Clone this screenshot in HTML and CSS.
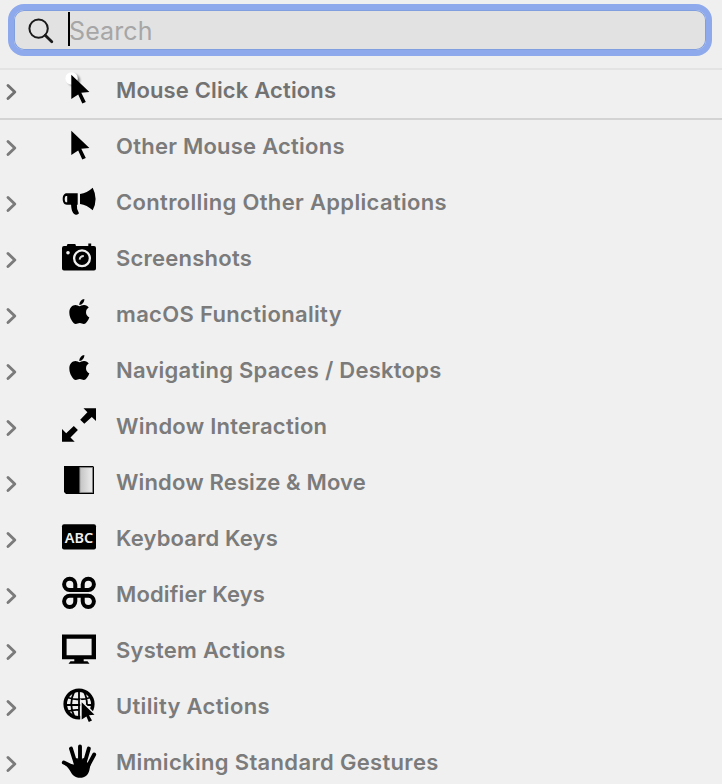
FILE: index.html
```html
<!DOCTYPE html>
<html lang="en">
<head>
<meta charset="utf-8">
<title>Actions</title>
<link rel="stylesheet" href="styles.css">
</head>
<body>
<svg class="defs" width="0" height="0">
  <symbol id="chevron" viewBox="0 0 14 20"><path d="M3 3.5 9.8 10 3 16.5" fill="none" stroke="currentColor" stroke-width="2.9" stroke-linecap="round" stroke-linejoin="round"/></symbol>
  <symbol id="pointer" viewBox="0 0 36 36"><path d="M9.3 2.8 27.4 20.1 19.3 20.7 23.8 30 20.3 31.4 16.2 22.4 9.3 27Z"/></symbol>
  <symbol id="apple" viewBox="0 0 36 36"><path transform="translate(7.1 1.2) scale(.0532 .0558)" d="M318.7 268.7c-.2-36.7 16.4-64.4 50-84.8-18.8-26.9-47.2-41.7-84.7-44.6-35.5-2.8-74.3 20.7-88.5 20.7-15 0-49.4-19.7-76.4-19.7C63.3 141.2 4 184.8 4 273.5q0 39.3 14.4 81.2c12.8 36.7 59 126.7 107.2 125.2 25.2-.6 43-17.9 75.8-17.9 31.8 0 48.3 17.9 76.4 17.9 48.6-.7 90.4-82.5 102.6-119.3-65.2-30.7-61.7-90-61.7-91.9zm-56.6-164.2c27.3-32.4 24.8-61.9 24-72.5-24.1 1.4-52 16.4-67.9 34.9-17.5 19.8-27.8 44.3-25.6 71.9 26.1 2 49.9-11.4 69.5-34.3z"/></symbol>
</svg>

<header class="toolbar">
  <div class="search">
    <svg class="search-icon" viewBox="0 0 26 26"><circle cx="10.6" cy="10.6" r="9.2" fill="none" stroke="#1a1a1a" stroke-width="2"/><path d="m17.2 17.2 6.6 6.6" stroke="#1a1a1a" stroke-width="2.8" stroke-linecap="round"/></svg>
    <span class="caret"></span><span class="placeholder">Search</span>
  </div>
</header>

<div class="row pinned">
  <svg class="chevron"><use href="#chevron"/></svg>
  <svg class="icon" viewBox="0 0 36 36">
    <defs><filter id="soft" x="-50%" y="-50%" width="200%" height="200%"><feGaussianBlur stdDeviation="1.2"/></filter></defs>
    <circle cx="12" cy="8.2" r="6" opacity=".45" filter="url(#soft)"/><circle cx="9.6" cy="6.5" r="6.2" fill="#fff"/><use href="#pointer"/>
  </svg>
  <span class="label tight">Mouse Click Actions</span>
</div>

<main class="list">
  <div class="row"><svg class="chevron"><use href="#chevron"/></svg><svg class="icon"><use href="#pointer"/></svg><span class="label">Other Mouse Actions</span></div>
  <div class="row"><svg class="chevron"><use href="#chevron"/></svg>
    <svg class="icon" viewBox="0 0 36 36"><path fill-rule="evenodd" d="M4.8 9.3H15.7V20.7H14.9Q14.4 25 17 29.3 15.8 31.3 13 30.5C9.8 28.5 9.3 24 9.1 20.7H4.8C2 20.7.7 18 .7 15S2 9.3 4.8 9.3ZM3.8 12C2.4 13 2.4 17 3.8 18.2H5.2V12ZM18 10Q25 9 30.7 3.7 36.5 15 30.7 26.3 25 21 18 20Z"/></svg><span class="label loose">Controlling Other Applications</span></div>
  <div class="row"><svg class="chevron"><use href="#chevron"/></svg>
    <svg class="icon" viewBox="0 0 36 36"><path d="M2 6H4.7L5.5 4H13.3L14 6H26.3V3.6H29.2V6H32Q34 6 34 8V28.6Q34 30.6 32 30.6H2Q0 30.6 0 28.6V8Q0 6 2 6Z"/><circle cx="20" cy="18.3" r="7.9" fill="none" stroke="#f0f0f0" stroke-width="2.3"/><path d="M17.6 19.6Q18 16.2 21.8 16" fill="none" stroke="#ddd" stroke-width="1.8"/><circle cx="6" cy="12.7" r="1.8" fill="#f0f0f0"/></svg><span class="label">Screenshots</span></div>
  <div class="row"><svg class="chevron"><use href="#chevron"/></svg><svg class="icon"><use href="#apple"/></svg><span class="label loose">macOS Functionality</span></div>
  <div class="row"><svg class="chevron"><use href="#chevron"/></svg><svg class="icon"><use href="#apple"/></svg><span class="label">Navigating Spaces / Desktops</span></div>
  <div class="row"><svg class="chevron"><use href="#chevron"/></svg>
    <svg class="icon" viewBox="0 0 36 36"><path d="M21.5.2H34V13L29.8 9 22.3 15.8 18.2 11.8 25.4 4.3ZM0 33.8V21L4.2 25.2 11.8 18 15.9 22 8.5 29.5 12.7 33.8Z"/></svg><span class="label">Window Interaction</span></div>
  <div class="row"><svg class="chevron"><use href="#chevron"/></svg>
    <svg class="icon" viewBox="0 0 36 36"><defs><linearGradient id="pane"><stop stop-color="#c4c4c4"/><stop offset="1" stop-color="#ececec"/></linearGradient></defs><path d="M2 2H31L32 3V30H4L2 28Z"/><rect x="17.9" y="3.6" width="12.5" height="24.8" fill="url(#pane)" stroke="#8c8c8c" stroke-width=".9"/></svg><span class="label tight">Window Resize &amp; Move</span></div>
  <div class="row"><svg class="chevron"><use href="#chevron"/></svg>
    <svg class="icon" viewBox="0 0 36 36"><rect y="4.2" width="34" height="25.4" rx="2"/><text class="abc" x="2.8" y="22.6" textLength="28.4">ABC</text></svg><span class="label tight">Keyboard Keys</span></div>
  <div class="row"><svg class="chevron"><use href="#chevron"/></svg>
    <svg class="icon" viewBox="0 0 36 36"><path d="M13.3 13.8V8.3A5.6 5.6 0 1 0 7.7 13.9H26.3A5.6 5.6 0 1 0 20.7 8.3V13.8M13.3 19.8V25.3A5.6 5.6 0 1 1 7.7 19.7H26.3A5.6 5.6 0 1 1 20.7 25.3V19.8" fill="none" stroke="#000" stroke-width="4"/></svg><span class="label tight">Modifier Keys</span></div>
  <div class="row"><svg class="chevron"><use href="#chevron"/></svg>
    <svg class="icon" viewBox="0 0 36 36"><path fill-rule="evenodd" d="M0 2.4H34V27.2H21.7V29.2H25.5L27.5 31.8H6.5L8.5 29.2H12.3V27.2H0ZM4.6 6.8V23.2H29.6V6.8Z"/></svg><span class="label">System Actions</span></div>
  <div class="row"><svg class="chevron"><use href="#chevron"/></svg>
    <svg class="icon" viewBox="0 0 36 36"><g fill="none" stroke="#000"><circle cx="17" cy="16" r="13.8" stroke-width="3.6"/><path d="M17 2V30M3 17H31M5.5 9.5Q17 13.5 28.5 9.5M5 23.5Q11 21.5 17 22M12.5 3Q6 16 12.5 29M21.5 3Q25 9 25 17" stroke-width="1.8"/></g><path d="M19.7 14.3 32.5 26.7 27 27.2 30 32.6 26.8 34 24.4 28.5 19.7 31.5Z" stroke="#f0f0f0" stroke-width="3" paint-order="stroke"/></svg><span class="label loose">Utility Actions</span></div>
  <div class="row"><svg class="chevron"><use href="#chevron"/></svg>
    <svg class="icon" viewBox="0 0 36 36"><path d="M1.8 18.6 9 22M9 4.6 13.5 19M18 2.4V19M26.8 4.6 22.6 19M32.2 10.5 26 22" stroke="#000" stroke-width="3.9" stroke-linecap="round"/><path d="M2.2 20.5 7 20 12 20.5 11.5 15 15.5 14 16.2 16 19.8 16 20.8 14 24.4 15 24.5 18 28.5 20.5C27.5 25 27.5 29 24.5 31.5 21 34.6 15 34.5 11.5 31.5 8.5 28.8 7.5 24 2.2 20.5Z"/></svg><span class="label loose">Mimicking Standard Gestures</span></div>
</main>
</body>
</html>
```
FILE: styles.css
```css
* { box-sizing: border-box; }
body {
  margin: 0;
  height: 784px;
  overflow: hidden;
  background: #f0f0f0;
  font-family: Inter, "Liberation Sans", sans-serif;
}
.defs { position: absolute; }
.toolbar {
  height: 70px;
  padding: 4px 10px 0 8px;
  background: #efefef;
  border-bottom: 2px solid #e3e3e3;
}
.search {
  display: flex;
  align-items: center;
  height: 52px;
  padding-left: 14px;
  border: 6px solid #8eaaec;
  border-radius: 16px;
  background: #e2e2e2;
  box-shadow: inset 0 0 0 1px #819fdf;
  background-clip: padding-box;
}
.search-icon { width: 26px; height: 26px; margin: 1px 14px 0 0; }
.caret { width: 2px; height: 34px; margin: -3px -1px 0 0; background: #000; }
.placeholder { padding-top: 2px; color: #a6a6a6; font-size: 25px; line-height: 36px; letter-spacing: .1px; }
.row {
  display: flex;
  align-items: center;
  height: 56px;
  padding-left: 5px;
  color: #7b7b7b;
}
.pinned {
  height: 50px;
  padding-bottom: 8px;
  border-bottom: 2px solid #d3d3d3;
  color: #727272;
}
.list { margin-top: -2px; }
.chevron { width: 14px; height: 20px; margin: 3px 43px 0 0; }
.icon { width: 36px; height: 36px; margin-right: 18px; overflow: visible; }
.label { font-size: 22px; font-weight: 600; line-height: 28px; letter-spacing: .24px; white-space: nowrap; }
.label.tight { letter-spacing: .15px; }
.label.loose { letter-spacing: .33px; }
.abc { font: 600 14.4px "Noto Sans", sans-serif; fill: #f0f0f0; }
```
